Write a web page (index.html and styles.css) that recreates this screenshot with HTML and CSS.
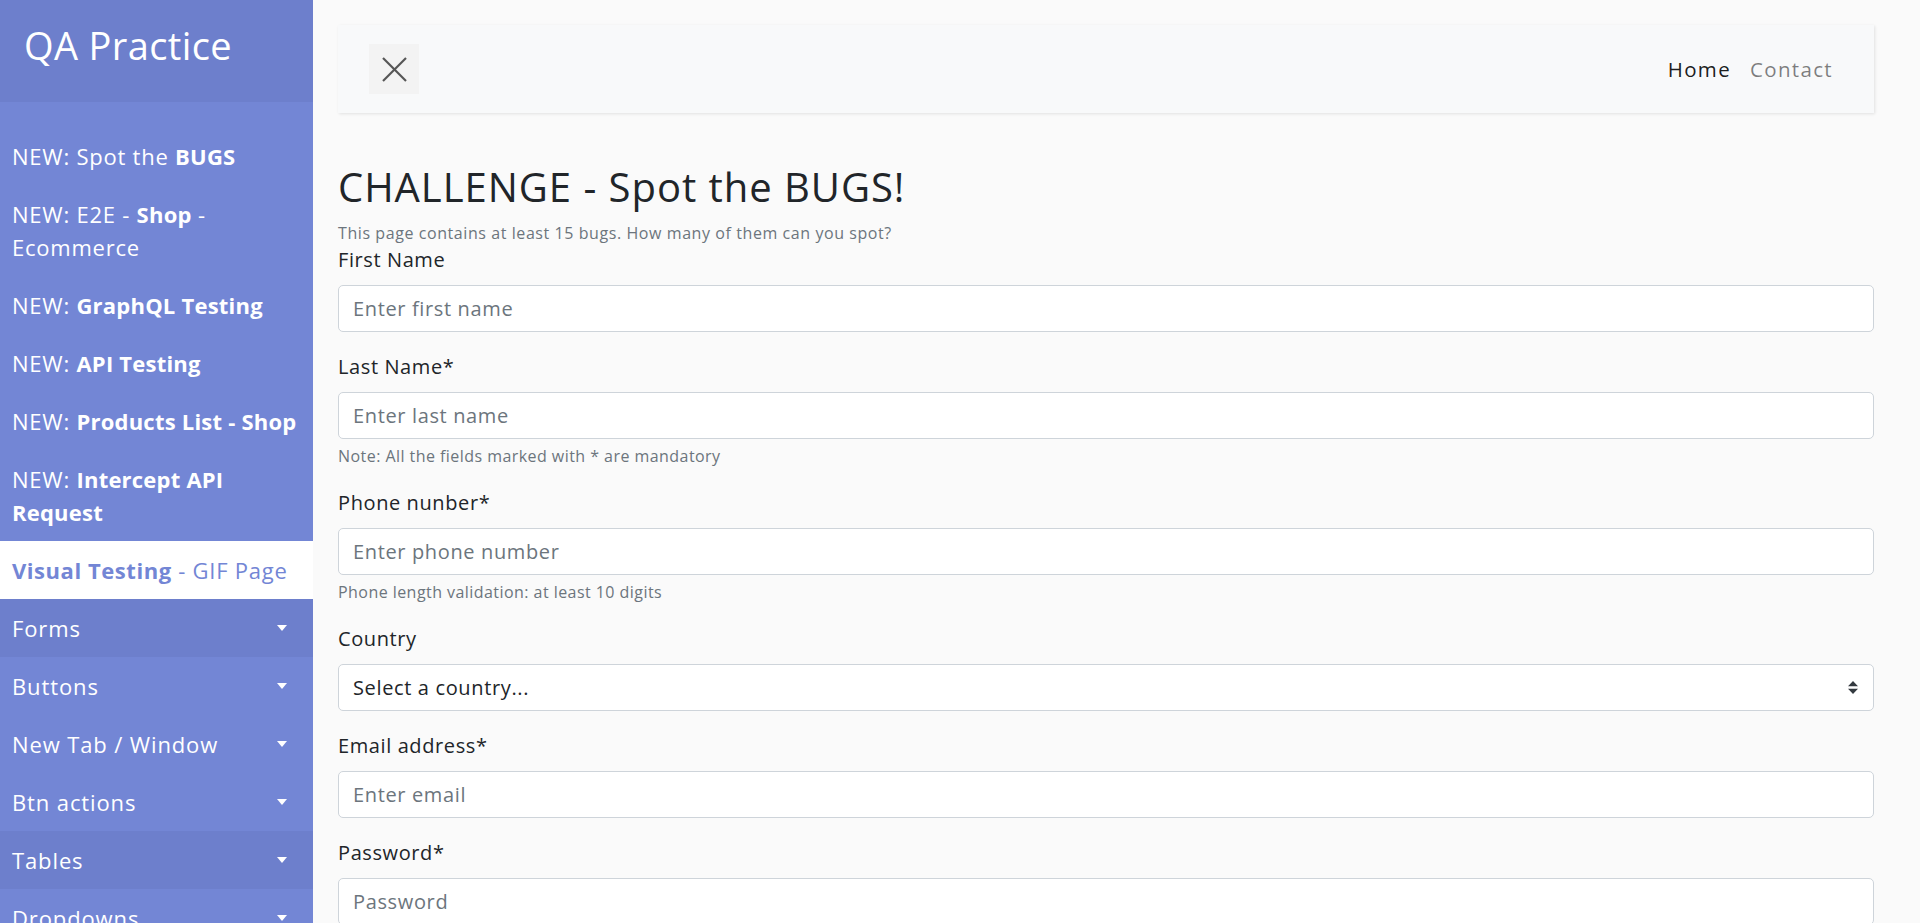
FILE: index.html
```html
<!DOCTYPE html>
<html lang="en">
<head>
<meta charset="utf-8">
<title>QA Practice | Spot the BUGS</title>
<link rel="stylesheet" href="styles.css">
</head>
<body>
<div class="wrapper">
  <nav class="sidebar">
    <div class="sidebar-header"><h3>QA Practice</h3></div>
    <ul class="components">
      <li><a href="#">NEW: Spot the <b>BUGS</b></a></li>
      <li><a href="#">NEW: E2E - <b>Shop</b> - Ecommerce</a></li>
      <li><a href="#">NEW: <b>GraphQL Testing</b></a></li>
      <li><a href="#">NEW: <b>API Testing</b></a></li>
      <li><a href="#">NEW: <b>Products List - Shop</b></a></li>
      <li><a href="#">NEW: <b>Intercept API Request</b></a></li>
      <li class="active"><a href="#"><b>Visual Testing</b> - GIF Page</a></li>
      <li class="dark"><a class="toggle" href="#">Forms</a></li>
      <li><a class="toggle" href="#">Buttons</a></li>
      <li><a class="toggle" href="#">New Tab / Window</a></li>
      <li><a class="toggle" href="#">Btn actions</a></li>
      <li class="dark"><a class="toggle" href="#">Tables</a></li>
      <li><a class="toggle" href="#">Dropdowns</a></li>
      <li><a class="toggle" href="#">Iframes</a></li>
      <li><a class="toggle" href="#">Alerts</a></li>
    </ul>
  </nav>
  <main class="content">
    <nav class="topbar">
      <button class="close-btn" type="button" aria-label="Toggle sidebar">
        <svg width="25" height="25" viewBox="0 0 25 25" aria-hidden="true">
          <line x1="1" y1="1" x2="24" y2="24" stroke="#555" stroke-width="2.2"/>
          <line x1="24" y1="1" x2="1" y2="24" stroke="#555" stroke-width="2.2"/>
        </svg>
      </button>
      <ul class="nav-links">
        <li><a class="current" href="#">Home</a></li>
        <li><a href="#">Contact</a></li>
      </ul>
    </nav>

    <h2 class="title">CHALLENGE - Spot the BUGS!</h2>
    <small class="lead-text">This page contains at least 15 bugs. How many of them can you spot?</small>

    <form class="form">
      <div class="group first">
        <label class="label">First Name</label>
        <input class="control" type="text" placeholder="Enter first name">
      </div>
      <div class="group">
        <label class="label">Last Name*</label>
        <input class="control" type="text" placeholder="Enter last name">
        <small class="hint">Note: All the fields marked with * are mandatory</small>
      </div>
      <div class="group">
        <label class="label">Phone nunber*</label>
        <input class="control" type="text" placeholder="Enter phone number">
        <small class="hint">Phone length validation: at least 10 digits</small>
      </div>
      <div class="group">
        <label class="label">Country</label>
        <select class="control select">
          <option>Select a country...</option>
        </select>
      </div>
      <div class="group">
        <label class="label">Email address*</label>
        <input class="control" type="email" placeholder="Enter email">
      </div>
      <div class="group">
        <label class="label">Password*</label>
        <input class="control" type="password" placeholder="Password">
      </div>
    </form>
  </main>
</div>
</body>
</html>
```

FILE: styles.css
```css
* { box-sizing: border-box; }

html, body {
  margin: 0;
  padding: 0;
}

body {
  font-family: "Open Sans", "Noto Sans", "Liberation Sans", sans-serif;
  font-size: 20px;
  line-height: 1.5;
  letter-spacing: 0.03em;
  color: #212529;
  background: #fafafa;
  overflow: hidden;
}

.wrapper {
  display: flex;
  align-items: stretch;
  min-height: 100vh;
}

/* Sidebar */
.sidebar {
  width: 313px;
  flex: 0 0 313px;
  background: #7386d5;
  color: #fff;
  min-height: 100vh;
}

.sidebar-header {
  background: #6d7fcc;
  height: 102px;
  padding: 19px 25px 0 24px;
}

.sidebar-header h3 {
  margin: 0;
  font-size: 38px;
  font-weight: 500;
  line-height: 52px;
  letter-spacing: 0.01em;
  color: #fff;
}

.components {
  list-style: none;
  margin: 0;
  padding: 25px 0 0;
}

.components a {
  display: block;
  padding: 12.5px 12.5px 12.5px 12px;
  font-size: 22px;
  line-height: 33px;
  letter-spacing: 0.035em;
  color: #fff;
  text-decoration: none;
}

.components a b {
  font-weight: 700;
  letter-spacing: 0.01em;
}

.components .dark a { background: #6d7fcc; }

.components .active a {
  background: #fff;
  color: #7386d5;
}

.components .active a b { letter-spacing: 0.025em; }

.components a.toggle {
  display: flex;
  align-items: center;
  justify-content: space-between;
  padding-right: 26px;
  letter-spacing: 0.04em;
}

.components a.toggle::after {
  content: "";
  display: block;
  border-top: 6px solid #fff;
  border-left: 5.5px solid transparent;
  border-right: 5.5px solid transparent;
}

/* Content */
.content {
  flex: 1 1 auto;
  min-width: 0;
  padding: 25px 46px 25px 25px;
}

.topbar {
  display: flex;
  align-items: center;
  justify-content: space-between;
  height: 88px;
  padding: 0 32px 0 31px;
  background: #f8f9fa;
  box-shadow: 1px 1px 3px rgba(0, 0, 0, 0.1);
  margin-bottom: 50px;
}

.close-btn {
  width: 50px;
  height: 50px;
  border: 0;
  padding: 0;
  background: #f3f3f3;
  display: flex;
  align-items: center;
  justify-content: center;
}

.nav-links {
  list-style: none;
  margin: 0;
  padding: 0;
  display: flex;
}

.nav-links a {
  display: block;
  padding: 10px;
  font-size: 20.5px;
  line-height: 30px;
  letter-spacing: 0.065em;
  color: rgba(0, 0, 0, 0.5);
  text-decoration: none;
}

.nav-links li:first-child a { padding-left: 14px; padding-right: 9px; }
.nav-links li:last-child a { padding-right: 9px; }

.nav-links a.current { color: rgba(0, 0, 0, 0.9); }

.title {
  margin: 0 0 10px;
  font-size: 40px;
  font-weight: 500;
  line-height: 48px;
  letter-spacing: 0.024em;
  color: #212529;
}

.lead-text {
  display: block;
  font-size: 16px;
  line-height: 24px;
  letter-spacing: 0.036em;
  color: #6c757d;
}

.form { margin: 0; }

.group { margin-bottom: 20px; }

.label {
  display: block;
  margin-bottom: 10px;
  font-size: 20px;
  line-height: 30px;
  color: #212529;
}

.control {
  display: block;
  width: 100%;
  height: 47px;
  padding: 0 14px 0 14px;
  font-family: inherit;
  font-size: 20px;
  letter-spacing: 0.032em;
  color: #212529;
  background: #fff;
  border: 1px solid #ced4da;
  border-radius: 5px;
  outline: none;
}

.control::placeholder { color: #6c757d; opacity: 1; }

.select {
  appearance: none;
  -webkit-appearance: none;
  background: #fff url("data:image/svg+xml,%3csvg xmlns='http://www.w3.org/2000/svg' width='4' height='5' viewBox='0 0 4 5'%3e%3cpath fill='%23343a40' d='M2 0L0 2h4zm0 5L0 3h4z'/%3e%3c/svg%3e") no-repeat right 15px center / 10px 12.5px;
}

.hint {
  display: block;
  margin-top: 5px;
  font-size: 16px;
  line-height: 24px;
  letter-spacing: 0.028em;
  color: #6c757d;
}
```
